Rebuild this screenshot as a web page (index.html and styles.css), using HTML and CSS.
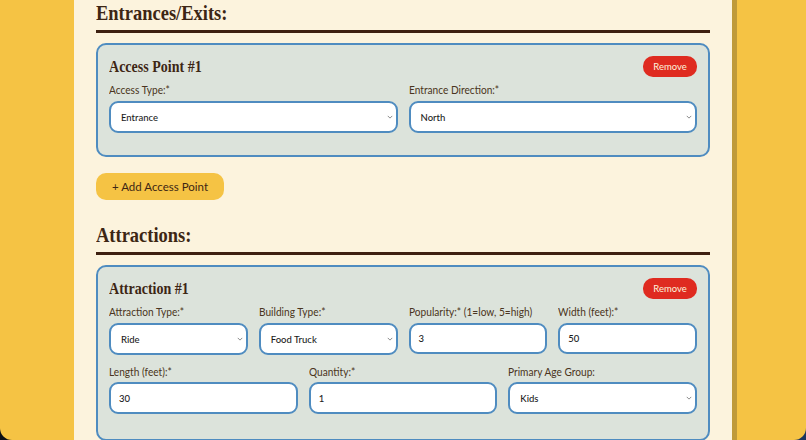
FILE: index.html
```html
<!DOCTYPE html>
<html lang="en">
<head>
<meta charset="utf-8">
<title>Park form</title>
<link rel="stylesheet" href="styles.css">
</head>
<body>
<main class="panel">
  <section class="section">
    <h2 class="section-title"><span>Entrances/Exits:</span></h2>
    <div class="card">
      <div class="card-head">
        <h3 class="card-title">Access Point #1</h3>
        <button class="remove" type="button">Remove</button>
      </div>
      <div class="row row-2">
        <div class="field">
          <label>Access Type:*</label>
          <div class="control select"><span>Entrance</span><svg viewBox="0 0 8 5" class="chev"><path d="M1 1l3 3 3-3"/></svg></div>
        </div>
        <div class="field">
          <label>Entrance Direction:*</label>
          <div class="control select"><span>North</span><svg viewBox="0 0 8 5" class="chev"><path d="M1 1l3 3 3-3"/></svg></div>
        </div>
      </div>
    </div>
    <button class="add" type="button">+ Add Access Point</button>
  </section>
  <section class="section">
    <h2 class="section-title"><span>Attractions:</span></h2>
    <div class="card">
      <div class="card-head">
        <h3 class="card-title">Attraction #1</h3>
        <button class="remove" type="button">Remove</button>
      </div>
      <div class="row row-4">
        <div class="field">
          <label>Attraction Type:*</label>
          <div class="control select"><span>Ride</span><svg viewBox="0 0 8 5" class="chev"><path d="M1 1l3 3 3-3"/></svg></div>
        </div>
        <div class="field">
          <label>Building Type:*</label>
          <div class="control select"><span>Food Truck</span><svg viewBox="0 0 8 5" class="chev"><path d="M1 1l3 3 3-3"/></svg></div>
        </div>
        <div class="field">
          <label>Popularity:* (1=low, 5=high)</label>
          <div class="control input"><span>3</span></div>
        </div>
        <div class="field">
          <label>Width (feet):*</label>
          <div class="control input"><span>50</span></div>
        </div>
      </div>
      <div class="row row-3">
        <div class="field">
          <label>Length (feet):*</label>
          <div class="control input"><span>30</span></div>
        </div>
        <div class="field">
          <label>Quantity:*</label>
          <div class="control input"><span>1</span></div>
        </div>
        <div class="field">
          <label>Primary Age Group:</label>
          <div class="control select"><span>Kids</span><svg viewBox="0 0 8 5" class="chev"><path d="M1 1l3 3 3-3"/></svg></div>
        </div>
      </div>
    </div>
  </section>
</main>
</body>
</html>
```
FILE: styles.css
```css
* { box-sizing: border-box; }
html { margin: 0; height: 440px; overflow: hidden; background: linear-gradient(to right, #0d0f14, #1b3560); }
body {
  margin: 0;
  height: 440px;
  overflow: hidden;
  background: #f5c344;
  border-radius: 0 0 12px 12px;
  font-family: "Lato", sans-serif;
  color: #3d2614;
  display: flex;
  justify-content: flex-start;
  padding-left: 74px;
}
.panel {
  width: 658px;
  height: 440px;
  background: #fcf3dd;
  box-shadow: 5px 0 0 #bf9a3a;
  padding: 0 22px;
}
.section-title {
  margin: 0;
  height: 33px;
  padding-top: 1px;
  font-family: "Liberation Serif", serif;
  font-weight: 700;
  font-size: 21px;
  line-height: 24px;
  border-bottom: 3px solid #3d2010;
}
.section-title span { display: inline-block; transform: scaleX(0.88); transform-origin: left center; white-space: nowrap; }
.section + .section { margin-top: 23px; }
.section + .section .section-title { height: 32px; padding-top: 0; }
.card {
  margin-top: 10px;
  height: 114px;
  padding: 11px 11px;
  background: #dce3db;
  border: 2px solid #4f8cc0;
  border-radius: 10px;
}
.section + .section .card { height: 176px; }
.card-head {
  display: flex;
  justify-content: space-between;
  align-items: center;
  height: 21px;
}
.card-title {
  margin: 0;
  font-family: "Liberation Serif", serif;
  font-weight: 700;
  font-size: 16.5px;
  line-height: 21px;
  white-space: nowrap;
  transform: scaleX(0.85);
  transform-origin: left center;
}
.remove {
  width: 54px;
  height: 21px;
  padding: 0;
  border: 0;
  border-radius: 10px;
  background: #df2b20;
  color: #fdf3dc;
  font: 400 9.5px "Lato", sans-serif;
}
.row { display: grid; gap: 11px; margin-top: 5px; }
.row-2 { grid-template-columns: repeat(2, 1fr); }
.row-4 { grid-template-columns: repeat(4, 1fr); }
.row-3 { grid-template-columns: repeat(3, 1fr); margin-top: 9px; }
.field { display: flex; flex-direction: column; gap: 4px; min-width: 0; }
.row-3 .field { gap: 3px; }
.field label {
  font-size: 12px;
  line-height: 15px;
  color: #4a3420;
  white-space: nowrap;
  transform: scaleX(0.845);
  transform-origin: left center;
}
.control {
  height: 32px;
  display: flex;
  align-items: center;
  justify-content: space-between;
  background: #fff;
  border: 2px solid #4f8cc0;
  border-radius: 9px;
  font-size: 9.5px;
  font-weight: 500;
  color: #1c1c1c;
}
.select { padding: 0 3px 0 10px; }
.input { padding: 0 8px; height: 31px; }
.row-3 .input { height: 32px; }
.chev { width: 6px; height: 4px; fill: none; stroke: #666; stroke-width: 1; }
.add {
  display: block;
  margin-top: 16px;
  width: 128px;
  height: 27px;
  padding: 0;
  border: 0;
  border-radius: 10px;
  background: #f5c344;
  color: #3d2614;
  font: 400 11.5px "Lato", sans-serif;
}
```
